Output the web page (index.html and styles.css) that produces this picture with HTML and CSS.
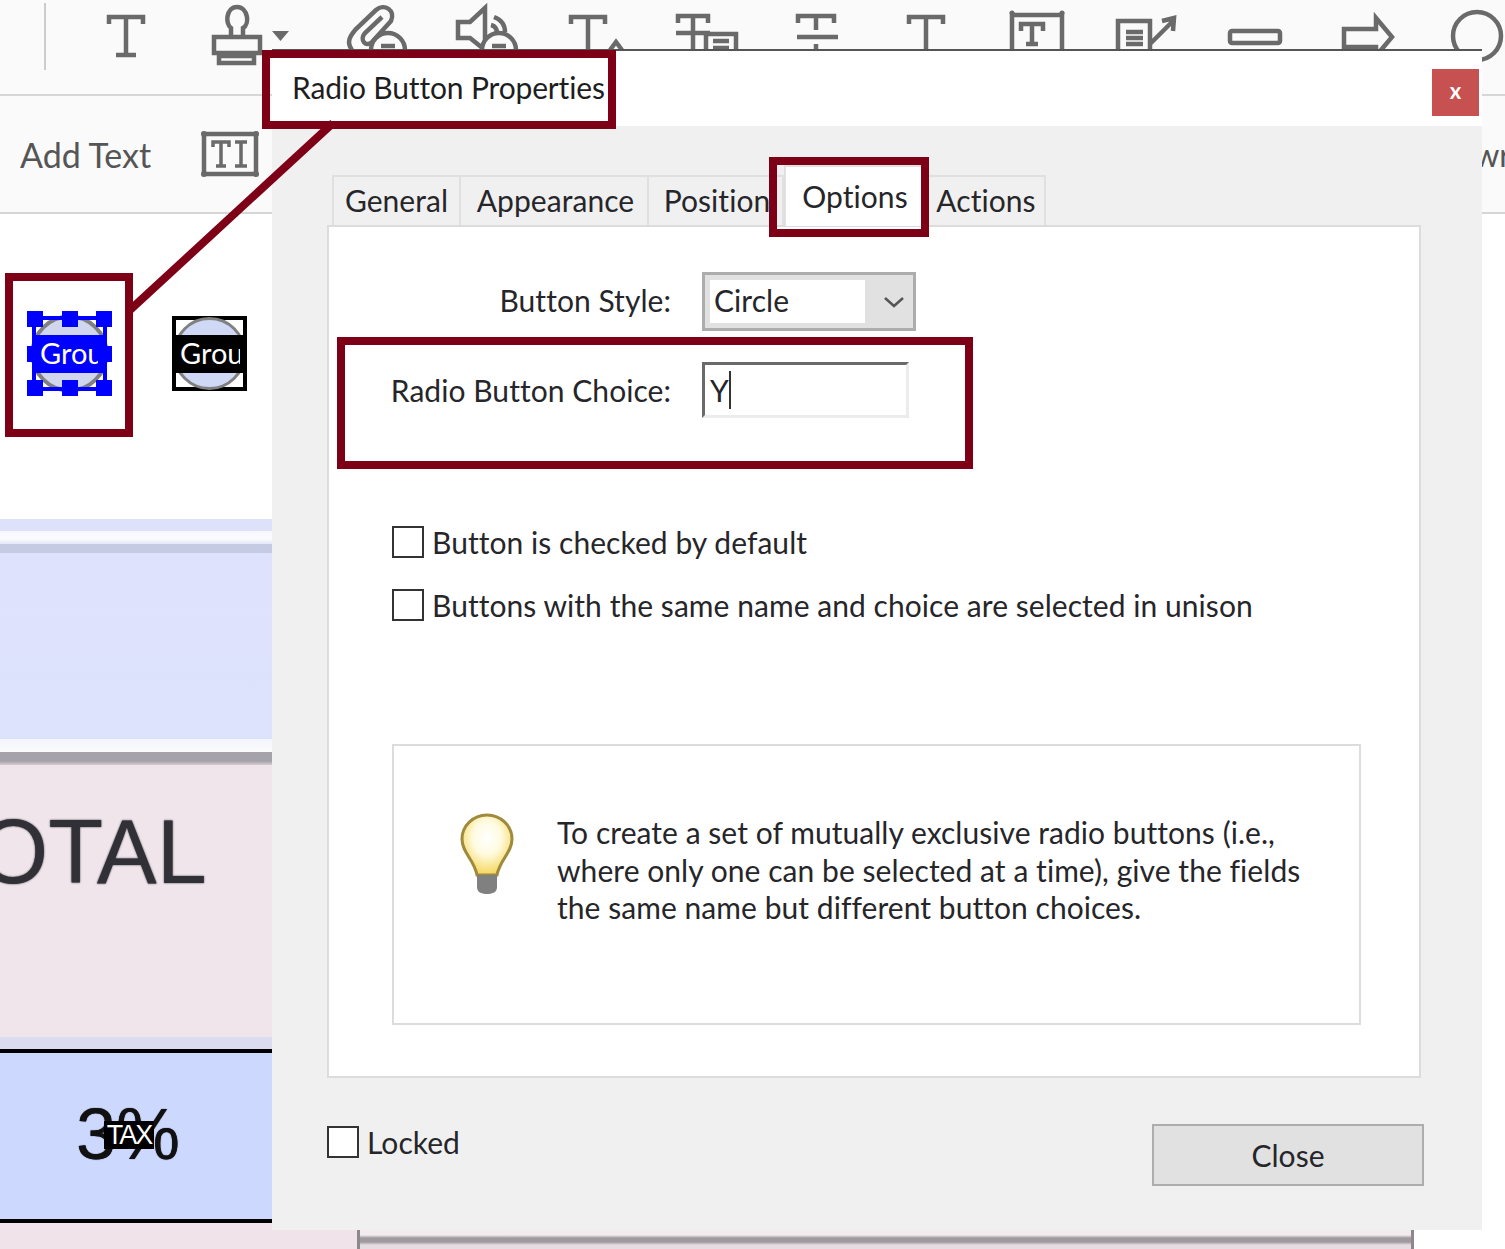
FILE: index.html
```html
<!DOCTYPE html>
<html lang="en">
<head>
<meta charset="utf-8">
<title>Radio Button Properties</title>
<link rel="stylesheet" href="styles.css">
</head>
<body>
<div class="page">
  <header class="chrome">
    <div class="tools">
      <svg class="tool-icon" width="46" height="94" viewBox="0 0 46 94"><path d="M45 3V70"/></svg>
      <svg class="tool-icon" width="110" height="94" viewBox="46 0 110 94"><path d="M109 24V17H143V24M126 17V55M116 55H136"/></svg>
      <svg class="tool-icon" width="175" height="94" viewBox="156 0 175 94"><path d="M231 36V28C225 24 226 7 237 7C248 7 250 24 243 28V36M214 37H260V53H214ZM219 53V63H254V53M220 56H254"/><path class="solid" d="M272 31H289L280.500 41Z"/></svg>
      <svg class="tool-icon" width="100" height="94" viewBox="331 0 100 94"><path d="M352 50C346 42 350 36 356 29L376 10C384 3 396 10 391 21L372 42C366 48 359 40 365 33L382 17"/><circle class="knock" cx="388" cy="50" r="17"/><path d="M381 46H395"/></svg>
      <svg class="tool-icon" width="110" height="94" viewBox="431 0 110 94"><path d="M458 22H470L485 8V50L470 38H458ZM494 17C502 20 505 26 505 32M491 25C495 26 497 29 497 33"/><circle class="knock" cx="499" cy="50" r="17"/><path d="M492 46H506"/></svg>
      <svg class="tool-icon" width="85" height="94" viewBox="541 0 85 94"><path d="M571 24V17H605V24M588 17V52M610 50L616 42L622 50"/></svg>
      <svg class="tool-icon" width="130" height="94" viewBox="626 0 130 94"><path d="M678 23V16H708V23M693 16V52M676 33H710M706 34H736V52H706ZM713 41H729M713 48H729"/></svg>
      <svg class="tool-icon" width="115" height="94" viewBox="756 0 115 94"><path d="M798 23V16H834V23M816 16V30M816 44V52M797 37H838"/></svg>
      <svg class="tool-icon" width="112" height="94" viewBox="871 0 112 94"><path d="M909 24V17H943V24M926 17V52"/></svg>
      <svg class="tool-icon" width="110" height="94" viewBox="983 0 110 94"><path d="M1012 15H1062M1012 12V52M1062 12V52M1021 31V24H1043V31M1032 24V44M1026 44H1038"/><circle class="dot" cx="1012" cy="13" r="2.500"/><circle class="dot" cx="1062" cy="13" r="2.500"/></svg>
      <svg class="tool-icon" width="112" height="94" viewBox="1093 0 112 94"><path d="M1118 52V21H1150V52M1126 32H1143M1126 38H1143M1126 44H1143M1150 44L1172 22M1162 21L1174 18L1173 31"/></svg>
      <svg class="tool-icon" width="112" height="94" viewBox="1205 0 112 94"><rect x="1230" y="31" width="50" height="12" rx="2"/></svg>
      <svg class="tool-icon" width="110" height="94" viewBox="1317 0 110 94"><path d="M1344 29H1376V18L1392 37L1376 56V47H1344Z"/></svg>
      <svg class="tool-icon" width="78" height="94" viewBox="1427 0 78 94"><circle cx="1477" cy="36" r="24"/></svg>
    </div>
    <div class="subtools">
      <span class="subtools-label">Add Text</span>
      <svg class="tool-icon" width="60" height="48" viewBox="0 0 60 48"><path d="M4 4H56V44H4Z"/><path class="thin" d="M13 17V12H29V17M21 12V36M16 36H26M35 12H47M41 12V36M35 36H47"/><circle class="dot" cx="4" cy="4" r="3"/><circle class="dot" cx="56" cy="4" r="3"/><circle class="dot" cx="4" cy="44" r="3"/><circle class="dot" cx="56" cy="44" r="3"/></svg>
      <span class="subtools-tail">wr</span>
    </div>
  </header>

  <main class="document">
    <div class="doc-blank">
      <div class="field-widget field-selected">
        <svg class="widget-art" width="85" height="85" viewBox="0 0 85 85">
          <rect fill="#fff" x="6" y="6" width="73" height="73"/>
          <circle cx="42.500" cy="42.500" r="37" fill="#cfd6ee" stroke="#808080" stroke-width="4"/>
          <g class="sel">
            <path d="M5 5H80V80H5ZM9 9V76H76V9Z" fill-rule="evenodd"/>
            <rect x="0" y="0" width="16" height="16"/><rect x="35" y="0" width="16" height="16"/><rect x="69" y="0" width="16" height="16"/><rect x="0" y="35" width="16" height="16"/><rect x="69" y="35" width="16" height="16"/><rect x="0" y="69" width="16" height="16"/><rect x="35" y="69" width="16" height="16"/><rect x="69" y="69" width="16" height="16"/>
          </g>
        </svg>
        <div class="widget-band band-blue"><span class="band-text text-short">Grou</span></div>
      </div>
      <div class="field-widget field-plain">
        <svg class="widget-art" width="75" height="75" viewBox="0 0 75 75">
          <rect x="2" y="2" width="71" height="71" fill="#fff" stroke="#000" stroke-width="4"/>
          <circle cx="37.500" cy="37.500" r="35" fill="#cfd8f5" stroke="#808080" stroke-width="3"/>
        </svg>
        <div class="widget-band band-black"><span class="band-text">Grou</span></div>
      </div>
    </div>
    <div class="band band-a"></div>
    <div class="band band-b"></div>
    <div class="band band-c"></div>
    <div class="band band-d"></div>
    <div class="band band-e"></div>
    <div class="band band-f"></div>
    <div class="band band-g"><span class="total-text">TOTAL</span></div>
    <div class="band band-h"></div>
    <div class="band band-i">
      <div class="tax-cell">3%<span class="tax-tag">TAX</span></div>
    </div>
    <div class="band-foot"><div class="foot-rule"></div></div>
  </main>

  <section class="dialog">
    <div class="titlebar">
      <h1 class="title">Radio Button Properties</h1>
      <button class="close-x">x</button>
    </div>
    <div class="dialog-body">
      <div class="tabs">
        <div class="tab tab-general">General</div>
        <div class="tab tab-appearance">Appearance</div>
        <div class="tab tab-position">Position</div>
        <div class="tab tab-active">Options</div>
        <div class="tab tab-actions">Actions</div>
      </div>
      <div class="panel">
        <div class="form">
          <div class="form-label form-label-style">Button Style:</div>
          <div class="select">
            <div class="select-value">Circle</div>
            <div class="select-arrow"><svg width="22" height="12" viewBox="0 0 22 12"><path d="M2 2L11 10L20 2"/></svg></div>
          </div>
          <div class="form-label">Radio Button Choice:</div>
          <div class="text-input">Y<span class="caret"></span></div>
        </div>
        <label class="check check-first"><input type="checkbox"><span>Button is checked by default</span></label>
        <label class="check check-second"><input type="checkbox"><span>Buttons with the same name and choice are selected in unison</span></label>
        <div class="hint">
          <svg class="bulb" width="60" height="84" viewBox="0 0 60 84">
            <defs>
              <radialGradient id="glow" cx="50%" cy="38%" r="62%">
                <stop offset="0" stop-color="#fff"/>
                <stop offset=".45" stop-color="#fffbe0"/>
                <stop offset="1" stop-color="#f5d65a"/>
              </radialGradient>
            </defs>
            <path d="M30 3C44 3 55 14 55 27C55 41 43 47 40 63H20C17 47 5 41 5 27C5 14 16 3 30 3Z" fill="url(#glow)" stroke="#a08a3c" stroke-width="3"/>
            <path d="M20 63H40V75C40 80 36 82 30 82C24 82 20 80 20 75Z" fill="#808080"/>
          </svg>
          <p class="hint-text">To create a set of mutually exclusive radio buttons (i.e.,<br>where only one can be selected at a time), give the fields<br>the same name but different button choices.</p>
        </div>
      </div>
      <div class="dialog-foot">
        <label class="check"><input type="checkbox"><span>Locked</span></label>
        <button class="close-btn">Close</button>
      </div>
    </div>
  </section>

  <svg class="leader" width="340" height="320" viewBox="0 0 340 320"><path d="M333 123L130 310"/></svg>
  <div class="callout callout-title"></div>
  <div class="callout callout-tab"></div>
  <div class="callout callout-choice"></div>
  <div class="callout callout-widget"></div>
</div>
</body>
</html>
```
FILE: styles.css
```css
* { box-sizing: border-box; }
html, body { margin: 0; padding: 0; background: #fff; }
.page {
  position: relative;
  width: 1505px;
  height: 1249px;
  overflow: hidden;
  font-family: "Lato", "Open Sans", sans-serif;
  color: #26262a;
}

/* application chrome behind the dialog */
.chrome { background: #fafafa; }
.tools {
  display: flex;
  height: 96px;
  border-bottom: 2px solid #d6d6d6;
}
.tool-icon { flex: none; display: block; }
.tool-icon path, .tool-icon rect, .tool-icon circle {
  fill: none;
  stroke: #6a6a6a;
  stroke-width: 4.500;
}
.tool-icon path.solid { fill: #6a6a6a; stroke: none; }
.tool-icon path.thin { stroke-width: 3.500; }
.tool-icon circle.knock { fill: #fafafa; }
.tool-icon circle.dot { fill: #6a6a6a; stroke: none; }
.tools .tool-icon:first-child path { stroke: #ccc; stroke-width: 2; }
.subtools {
  display: flex;
  align-items: center;
  height: 118px;
  padding-left: 20px;
  border-bottom: 2px solid #d6d6d6;
  overflow: hidden;
}
.subtools-label {
  font-size: 34px;
  color: #555;
  margin-right: 49px;
}
.subtools-tail {
  margin-left: auto;
  margin-right: -6px;
  font-size: 32px;
  color: #555;
}

/* document page */
.document { display: flex; flex-direction: column; width: 1414px; }
.doc-blank { position: relative; height: 305px; background: #fff; }
.band { flex: none; }
.band-a { height: 12px; background: #dde1fa; }
.band-b { height: 13px; background: linear-gradient(#f6f6fe, #fbfbff 60%, #e4e7f6); }
.band-c { height: 9px; background: #c5cbe3; }
.band-d { height: 186px; background: linear-gradient(#dfe2fd, #dde3fc); }
.band-e { height: 13px; background: linear-gradient(#f4f5fd, #fbfbfb); }
.band-f { height: 13px; background: linear-gradient(#a5a3a9 70%, #d8ccd4); }
.band-g { height: 272px; background: #efe5eb; padding-top: 35px; overflow: hidden; }
.band-h { height: 16px; background: linear-gradient(#dcdcf0 0 12px, #000 12px); }
.band-i { height: 170px; background: #ccd8fe; border-bottom: 4px solid #000; padding: 45px 0 0 76px; }
.band-foot { flex: none; height: 26px; background: #f0e4ea; padding-left: 357px; }
.foot-rule {
  height: 100%;
  background: linear-gradient(#f3ecef 0 12px, #a09a9f 15px 19px, #e6dde2 22px);
  border-left: 3px solid #8d888c;
  border-right: 3px solid #8d888c;
}
.total-text {
  display: block;
  margin-left: -75px;
  font-family: "Liberation Sans", sans-serif;
  font-size: 90px;
  line-height: 104px;
  color: #303036;
  text-shadow: 0 0 2px #303036;
}
.tax-cell {
  position: relative;
  width: 104px;
  font-family: "Liberation Sans", sans-serif;
  font-size: 72px;
  line-height: 72px;
  color: #111;
  text-shadow: 0 0 1px #000;
  white-space: nowrap;
}
.tax-tag {
  position: absolute;
  left: 28px;
  top: 23px;
  width: 50px;
  height: 28px;
  background: #000;
  color: #fff;
  font-size: 27px;
  line-height: 28px;
  letter-spacing: -2px;
  text-align: center;
  text-shadow: none;
}

/* form field widgets placed on the document */
.field-widget {
  position: absolute;
  display: flex;
  align-items: center;
}
.field-selected { left: 27px; top: 97px; width: 85px; height: 85px; padding: 0 5px; }
.field-plain { left: 172px; top: 102px; width: 75px; height: 75px; }
.widget-art { position: absolute; left: 0; top: 0; }
.sel { fill: #0000ff; }
.widget-band {
  position: relative;
  flex: 1;
  height: 38px;
  color: #fff;
  font-size: 29px;
  line-height: 36px;
  padding-left: 8px;
}
.band-text {
  display: block;
  width: 60px;
  overflow: hidden;
  white-space: nowrap;
}
.band-text.text-short { width: 58px; }
.band-blue { background: #0000ff; }
.band-black { background: #000; }

/* dialog window */
.dialog {
  position: absolute;
  left: 272px;
  top: 49px;
  width: 1210px;
  height: 1181px;
  display: flex;
  flex-direction: column;
  background: #f0f0f0;
  border-top: 2px solid #555;
  font-size: 30px;
  letter-spacing: 0.05px;
}
.titlebar {
  flex: none;
  height: 75px;
  display: flex;
  justify-content: space-between;
  align-items: flex-start;
  background: #fff;
  padding: 18px 3px 0 20px;
}
.title {
  margin: 0;
  font: inherit;
  letter-spacing: -0.15px;
  line-height: 36px;
  color: #1e1e22;
}
.close-x {
  width: 47px;
  height: 47px;
  padding: 0 0 4px;
  border: 0;
  background: #c75050;
  color: #fff;
  font: 700 22px "Lato", sans-serif;
}
.dialog-body {
  flex: 1;
  display: flex;
  flex-direction: column;
  padding: 39px 61px 0 55px;
}
.tabs {
  display: flex;
  height: 61px;
  align-items: flex-end;
  padding-left: 5px;
  margin-bottom: -1px;
}
.tab {
  height: 51px;
  border: 2px solid #e0e0e0;
  border-bottom: 0;
  border-left-width: 0;
  line-height: 46px;
  text-align: center;
  background: #f0f0f0;
  white-space: nowrap;
}
.tab-general { width: 129px; border-left-width: 2px; }
.tab-appearance { width: 188px; padding-left: 3px; }
.tab-position { width: 135px; padding-left: 3px; }
.tab-active {
  width: 142px;
  height: 61px;
  background: #fff;
  line-height: 58px;
  position: relative;
  border-left-width: 2px;
}
.tab-actions { width: 120px; padding-left: 2px; }
.panel {
  height: 853px;
  background: #fff;
  border: 2px solid #dcdcdc;
  padding-top: 45px;
}
.form {
  display: grid;
  grid-template-columns: 342px auto;
  justify-content: start;
  column-gap: 31px;
  row-gap: 31px;
  align-items: center;
}
.form-label { text-align: right; white-space: nowrap; }
.form-label-style { margin-top: -4px; }
.select {
  display: flex;
  width: 214px;
  height: 59px;
  background: #e1e1e1;
  border: 3px solid #adadad;
}
.select-value {
  width: 155px;
  margin: 5px 0 5px 5px;
  padding-left: 4px;
  background: #fff;
  line-height: 40px;
}
.select-arrow {
  flex: 1;
  display: flex;
  align-items: center;
  justify-content: center;
  padding-left: 10px;
}
.select-arrow svg path { fill: none; stroke: #555; stroke-width: 2.500; }
.text-input {
  display: flex;
  align-items: center;
  width: 207px;
  height: 56px;
  padding-left: 5px;
  background: #fff;
  border: 3px solid #ececec;
  border-top-color: #6a6a6a;
  border-left-color: #6a6a6a;
  line-height: 50px;
}
.caret { width: 2px; height: 38px; background: #333; }
.check {
  display: flex;
  align-items: center;
  gap: 8px;
  white-space: nowrap;
}
.check input {
  appearance: none;
  width: 32px;
  height: 32px;
  margin: 0;
  flex: none;
  background: #fff;
  border: 2px solid #333;
}
.check-first { margin: 106px 0 0 63px; }
.check-second { margin: 27px 0 0 63px; }
.hint {
  display: flex;
  align-items: flex-start;
  width: 969px;
  height: 281px;
  margin: 121px 0 0 63px;
  padding: 66px 0 0 63px;
  border: 2px solid #dcdcdc;
}
.bulb { flex: none; }
.hint-text {
  margin: 2px 0 0 40px;
  line-height: 37.500px;
  white-space: nowrap;
}
.dialog-foot {
  display: flex;
  justify-content: space-between;
  align-items: flex-start;
  margin-right: -3px;
  padding-top: 46px;
}
.close-btn {
  width: 272px;
  height: 62px;
  background: #e1e1e1;
  border: 2px solid #adadad;
  color: #26262a;
  font: inherit;
  letter-spacing: inherit;
}

/* red annotation overlays */
.leader { position: absolute; left: 0; top: 0; }
.leader path { fill: none; stroke: #7d0016; stroke-width: 8; }
.callout { position: absolute; border: 8px solid #7d0016; }
.callout-title { left: 262px; top: 50px; width: 354px; height: 79px; }
.callout-tab { left: 769px; top: 157px; width: 160px; height: 80px; }
.callout-choice { left: 337px; top: 337px; width: 636px; height: 132px; }
.callout-widget { left: 5px; top: 273px; width: 128px; height: 164px; }
```
